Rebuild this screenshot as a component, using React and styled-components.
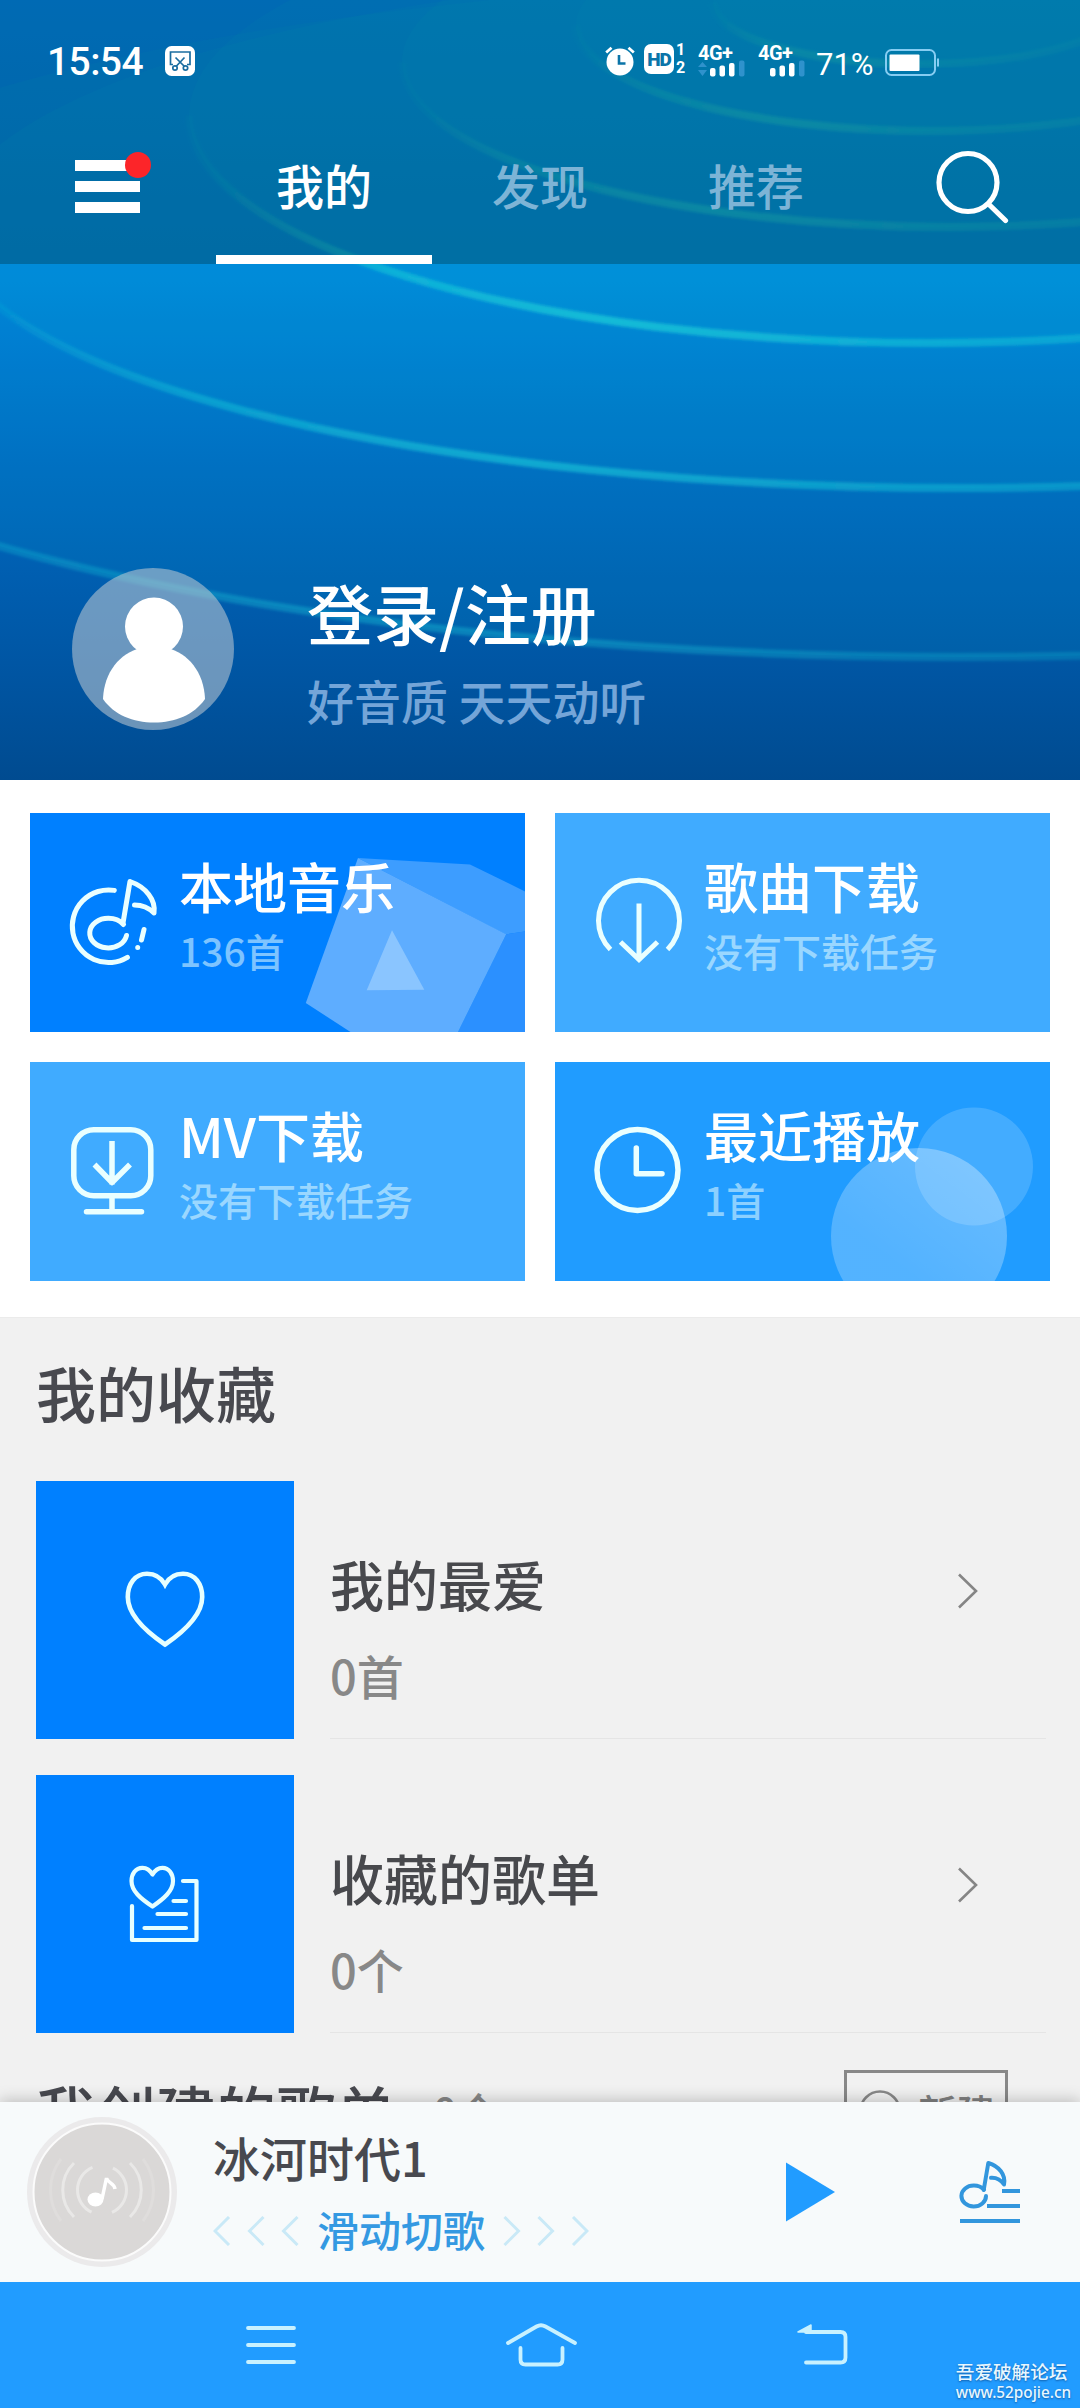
import React, { useState } from 'react';
import styled, { createGlobalStyle } from 'styled-components';

const tabs = ['我的', '发现', '推荐'];

const rings = [
	{ cx: 960, cy: 317, rx: 1300, ry: 340, opacity: 0.45 },
	{ cx: 960, cy: 226, rx: 1010, ry: 262, opacity: 0.75 },
	{ cx: 930, cy: 115, rx: 741, ry: 228, opacity: 0.95 },
	{ cx: 950, cy: 62, rx: 548, ry: 165, opacity: 0.7 },
	{ cx: 930, cy: 25, rx: 354, ry: 106, opacity: 0.7 },
	{ cx: 920, cy: 3, rx: 207, ry: 61, opacity: 0.6 },
];

const HeroBackground = () => (
	<Backdrop viewBox="0 0 1080 780" fill="none">
		<defs>
			<linearGradient id="heroBase" x1="0" y1="0" x2="0" y2="1">
				<stop offset="0" stopColor="#008af0" />
				<stop offset="0.36" stopColor="#0080d8" />
				<stop offset="0.62" stopColor="#0067bd" />
				<stop offset="0.85" stopColor="#0056a4" />
				<stop offset="1" stopColor="#004b90" />
			</linearGradient>
			<linearGradient id="ringLine" x1="0" y1="0" x2="1" y2="0">
				<stop offset="0" stopColor="#16c4d8" stopOpacity="0.1" />
				<stop offset="0.12" stopColor="#16c4d8" stopOpacity="0.65" />
				<stop offset="0.28" stopColor="#16c4d8" stopOpacity="0.9" />
				<stop offset="0.58" stopColor="#16c4d8" stopOpacity="0.55" />
				<stop offset="1" stopColor="#16c4d8" stopOpacity="0.2" />
			</linearGradient>
			<filter id="soft" x="-5%" y="-5%" width="110%" height="110%">
				<feGaussianBlur stdDeviation="1.6" />
			</filter>
		</defs>
		<rect width="1080" height="780" fill="url(#heroBase)" />
		{rings.map(({ cx, cy, rx, ry, opacity }) => (
			<g key={rx}>
				<ellipse cx={cx} cy={cy} rx={rx} ry={ry} fill="#00c4d8" fillOpacity="0.085" />
				<path
					d={`M${cx - rx} ${cy} A${rx} ${ry} 0 0 0 ${cx + rx} ${cy}`}
					stroke="url(#ringLine)"
					strokeWidth="8"
					opacity={opacity}
					filter="url(#soft)"
				/>
			</g>
		))}
	</Backdrop>
);

const ScissorsIcon = () => (
	<svg width="30" height="30" viewBox="0 0 30 30" fill="none">
		<rect width="30" height="30" rx="6.5" fill="#fff" />
		<g stroke="#1b6da0" strokeWidth="1.7">
			<path d="M8 18.5H5.5V6h19.5v12.5h-3" />
			<path d="M10.500 11.500L19.500 20.500M19.500 11.500L11 20.500" />
			<circle cx="10" cy="22" r="2.200" />
			<circle cx="20.500" cy="22" r="2.200" />
		</g>
	</svg>
);

const AlarmIcon = () => (
	<svg width="30" height="30" viewBox="0 0 30 30" fill="none">
		<circle cx="15" cy="16" r="13.5" fill="#fff" />
		<path d="M1.200 6.500L6.500 1.800M28.800 6.500L23.500 1.800" stroke="#fff" strokeWidth="2.800" />
		<path d="M14 9v8.500h6.500" stroke="#0b74a8" strokeWidth="2.600" />
	</svg>
);

const Signal = ({ arrows }) => (
	<SignalBox>
		<span>4G+</span>
		<svg width="47" height="17" viewBox="0 0 47 17">
			{arrows && <path d="M0 7l4.500-5 4.500 5zM0 10l4.500 6 4.500-6z" fill="#2f92cc" />}
			<rect x="12" y="8" width="5.500" height="8.500" rx="2" fill="#fff" />
			<rect x="21.500" y="5.500" width="5.500" height="11" rx="2" fill="#fff" />
			<rect x="31" y="3" width="5.500" height="13.500" rx="2" fill="#fff" />
			<rect x="41" y="0.500" width="5.500" height="16" rx="2" fill="#2f92cc" />
		</svg>
	</SignalBox>
);

const BatteryIcon = () => (
	<BatterySvg width="55" height="28" viewBox="0 0 55 28" fill="none">
		<rect x="1" y="1" width="49" height="25" rx="5.500" stroke="#86cdf2" strokeWidth="2" />
		<rect x="4.500" y="5.500" width="30" height="16.500" rx="1" fill="#fff" />
		<path d="M53 9.500v8" stroke="#86cdf2" strokeWidth="2" />
	</BatterySvg>
);

const MenuIcon = () => (
	<svg width="80" height="64" viewBox="0 0 80 64">
		<path d="M3 10h65v11H3zM3 31h65v11H3zM3 52h65v11H3z" fill="#fff" />
		<circle cx="66" cy="15" r="13" fill="#fc2529" />
	</svg>
);

const SearchIcon = () => (
	<svg width="76" height="76" viewBox="0 0 76 76" fill="none" stroke="#fff" strokeWidth="5.200">
		<circle cx="34" cy="34.500" r="29" />
		<path d="M54.500 56L71.500 72.500" strokeLinecap="round" />
	</svg>
);

const PersonIcon = () => (
	<svg width="162" height="162" viewBox="0 0 162 162" fill="#fff">
		<circle cx="82" cy="58.500" r="29" />
		<path d="M31 131C32 104 48 85 69 80h26c21 5 37 24 38 51c-11 16-30 23.500-51 23.500S42 147 31 131z" />
	</svg>
);

const MusicIcon = () => (
	<CardIcon $stroke={5}>
		<path d="M50.300 20.400A36.300 36.300 0 1 0 63.400 87.300" />
		<path d="M59.500 54.500C55 49.500 49 48.300 44.500 48.300A18.500 14.800 0 1 0 62.500 65.500" />
		<path d="M59 53L66 11.500C82 17 92 30 90 43C84 37 76 35 70.500 35" />
		<path d="M80 59.500L77.500 70M73.700 77.400v.2" />
	</CardIcon>
);

const SongDownloadIcon = () => (
	<CardIcon $stroke={5}>
		<path strokeLinecap="butt" d="M21.500 79.500A40.500 40.500 0 1 1 78.500 79.500" />
		<path strokeLinecap="butt" strokeLinejoin="miter" d="M50 33.500v55M31.500 72L50 89.500 68.500 72" />
	</CardIcon>
);

const MvDownloadIcon = () => (
	<CardIcon $stroke={5.5}>
		<rect x="9.800" y="10.700" width="77" height="66" rx="20" />
		<path strokeLinecap="butt" d="M48 22v43.500M30.500 45.500L48 63.500 66 45.500" />
		<path d="M48 78v14M22.500 92.700h55" />
	</CardIcon>
);

const ClockIcon = () => (
	<CardIcon $stroke={5.5}>
		<circle cx="48.500" cy="51" r="40.500" />
		<path d="M47.300 29v25.700H73" />
	</CardIcon>
);

const CubeArt = () => (
	<CardArt viewBox="0 0 495 219">
		<path d="M328 45l112 6.400 55 27v40l-19 3z" fill="#3d9dff" />
		<path d="M476.200 121.300l18.800-3V219h-67z" fill="#2b90ff" />
		<path d="M328 45l148.200 76.300L428 219H320.500l-44.700-29z" fill="#5eadff" />
		<path d="M362 117.300l32.300 59.400-57.600.5z" fill="#8ac5ff" />
	</CardArt>
);

const BubbleArt = () => (
	<CardArt viewBox="0 0 495 219">
		<defs>
			<linearGradient id="bubble" x1="0.75" y1="0" x2="0.3" y2="0.6">
				<stop offset="0" stopColor="#fff" stopOpacity="0.32" />
				<stop offset="1" stopColor="#fff" stopOpacity="0.23" />
			</linearGradient>
		</defs>
		<circle cx="419" cy="104.500" r="59" fill="#fff" fillOpacity="0.16" />
		<circle cx="364" cy="174" r="88" fill="url(#bubble)" />
	</CardArt>
);

const HeartIcon = () => (
	<svg width="84" height="78" viewBox="0 0 84 78" fill="none" stroke="#e6ffff" strokeWidth="4.600">
		<path d="M42 13.500C37 4.500 30 2.800 24 2.800C12 2.800 4.800 13 4.800 26C4.800 43 20 58.500 42 73.500C64 58.500 79.200 43 79.200 26C79.200 13 72 2.800 60 2.800C54 2.800 47 4.500 42 13.500z" />
	</svg>
);

const SongListIcon = () => (
	<svg
		width="76"
		height="80"
		viewBox="0 0 76 80"
		fill="none"
		stroke="#e6ffff"
		strokeWidth="4.200"
		strokeLinecap="round"
		strokeLinejoin="round"
	>
		<path d="M25.500 10.500C22.500 5 18.500 3.800 15.500 3.800C8.500 3.800 4.500 10 4.500 17C4.500 27 13.500 34.500 25.500 42.500C37 34.500 46 27 46 17C46 10 42 3.800 35.500 3.800C32 3.800 28.500 5 25.500 10.500z" />
		<path d="M5 42v34h64.500V17H56" />
		<path d="M46.500 37h12.500M30.500 50H59M17.500 64H59" />
	</svg>
);

const Chevron = () => (
	<svg width="22" height="36" viewBox="0 0 22 36" fill="none" stroke="#858585" strokeWidth="2.600">
		<path d="M2 1.500L19 18 2 34.500" />
	</svg>
);

const PlusIcon = () => (
	<svg width="42" height="42" viewBox="0 0 42 42" fill="none" stroke="#888" strokeWidth="2.600">
		<circle cx="21" cy="21" r="19.500" />
		<path d="M21 12v18M12 21h18" />
	</svg>
);

const Disc = () => (
	<svg width="150" height="150" viewBox="0 0 150 150" fill="none">
		<circle cx="75" cy="75" r="75" fill="#ebeaeb" />
		<circle cx="75" cy="75" r="68.500" fill="#dad8d7" stroke="#fbfbfb" strokeWidth="2" />
		<g stroke="#e9e8e7" strokeWidth="3">
			<circle cx="75" cy="73" r="24.500" strokeDasharray="56 21" strokeDashoffset="28" />
			<path d="M47 46a38 38 0 0 0 0 54M103 46a38 38 0 0 1 0 54" />
			<path d="M34 42a51 51 0 0 0 0 62M116 42a51 51 0 0 1 0 62" stroke="#dfdddc" />
		</g>
		<ellipse cx="68.500" cy="82.500" rx="8" ry="7" fill="#fff" />
		<path d="M75 82L79.500 61c1 5 8 5 8.500 11" stroke="#fff" strokeWidth="3.500" />
	</svg>
);

const Arrows = ({ flip }) => (
	<ArrowsSvg $flip={flip} width="86" height="30" viewBox="0 0 86 30">
		<path d="M16 1L2 15 16 29M50.500 1L36.500 15 50.500 29M84.500 1L70.500 15 84.500 29" />
	</ArrowsSvg>
);

const PlayIcon = () => (
	<svg width="50" height="60" viewBox="0 0 50 60">
		<path d="M0 0.500L49 30 0 59.500z" fill="#219cff" />
	</svg>
);

const QueueIcon = () => (
	<svg
		width="64"
		height="66"
		viewBox="0 0 64 66"
		fill="none"
		stroke="#3296dd"
		strokeWidth="4"
		strokeLinejoin="round"
	>
		<path d="M26 30.500C23 27.500 19 26.500 16 26.500A12.300 10.500 0 1 0 28 37" strokeLinecap="round" />
		<path d="M25.700 31L30.300 4C41 7 48 16 46 25.500C43 21 38 18.500 33 18.800" strokeLinecap="round" />
		<path d="M44 32h18M29 47h33M2 62h60" />
	</svg>
);

const NavMenuIcon = () => (
	<NavSvg viewBox="0 0 80 60">
		<path d="M17 13h46M17 30h46M17 47h46" />
	</NavSvg>
);

const NavHomeIcon = () => (
	<NavSvg viewBox="0 0 80 60">
		<path d="M7 28L35.500 11.500Q40 9 44.500 11.500L74 28" />
		<path d="M19.500 33v11.500q0 5 5 5h32q5 0 5-5V33" />
	</NavSvg>
);

const NavBackIcon = () => (
	<NavSvg viewBox="0 0 80 60">
		<path d="M22 17h34.500q5 0 5 5v20.500q0 5-5 5H22" />
		<path d="M14 17l13-7v7z" fill="#c8f1ff" strokeWidth="1.500" />
	</NavSvg>
);

const entries = [
	{ title: '本地音乐', note: '136首', color: '#0080ff', Icon: MusicIcon, Art: CubeArt },
	{ title: '歌曲下载', note: '没有下载任务', color: '#40abff', Icon: SongDownloadIcon },
	{ title: 'MV下载', note: '没有下载任务', color: '#40abff', Icon: MvDownloadIcon },
	{ title: '最近播放', note: '1首', color: '#209cff', Icon: ClockIcon, Art: BubbleArt },
];

const favorites = [
	{ title: '我的最爱', count: '0首', Icon: HeartIcon },
	{ title: '收藏的歌单', count: '0个', Icon: SongListIcon },
];

export default function App() {
	const [activeTab, setActiveTab] = useState(0);
	return (
		<>
			<GlobalStyle />
			<Page>
				<Hero>
					<HeroBackground />
					<TopBar>
						<StatusBar>
							<Clock>15:54</Clock>
							<ScissorsIcon />
							<StatusRight>
								<AlarmIcon />
								<HdBadge>
									<b>HD</b>
									<span>
										<i>1</i>
										<i>2</i>
									</span>
								</HdBadge>
								<Signal arrows />
								<Signal />
								<Percent>71%</Percent>
								<BatteryIcon />
							</StatusRight>
						</StatusBar>
						<TabBar>
							<IconButton>
								<MenuIcon />
							</IconButton>
							{tabs.map((tab, index) => (
								<Tab
									key={tab}
									$active={index === activeTab}
									onClick={() => setActiveTab(index)}
								>
									{tab}
								</Tab>
							))}
							<IconButton>
								<SearchIcon />
							</IconButton>
						</TabBar>
					</TopBar>
					<Profile>
						<Avatar>
							<PersonIcon />
						</Avatar>
						<div>
							<h1>登录/注册</h1>
							<p>好音质 天天动听</p>
						</div>
					</Profile>
				</Hero>
				<Entries>
					{entries.map(({ title, note, color, Icon, Art }) => (
						<Card key={title} $color={color}>
							{Art && <Art />}
							<Icon />
							<CardText>
								<h2>{title}</h2>
								<p>{note}</p>
							</CardText>
						</Card>
					))}
				</Entries>
				<Library>
					<SectionTitle>我的收藏</SectionTitle>
					<FavoriteList>
						{favorites.map(({ title, count, Icon }) => (
							<Favorite key={title}>
								<Cover>
									<Icon />
								</Cover>
								<FavoriteBody>
									<div>
										<h3>{title}</h3>
										<p>{count}</p>
									</div>
									<Chevron />
								</FavoriteBody>
							</Favorite>
						))}
					</FavoriteList>
					<CreatedHeader>
						<SectionTitle>我创建的歌单</SectionTitle>
						<span>0个</span>
						<NewButton>
							<PlusIcon />
							新建
						</NewButton>
					</CreatedHeader>
				</Library>
				<Player>
					<Disc />
					<Song>
						<h3>冰河时代1</h3>
						<SwipeHint>
							<Arrows />
							滑动切歌
							<Arrows flip />
						</SwipeHint>
					</Song>
					<PlayIcon />
					<QueueIcon />
				</Player>
				<SystemNav>
					<NavMenuIcon />
					<NavHomeIcon />
					<NavBackIcon />
					<Watermark>
						<strong>吾爱破解论坛</strong>
						<span>www.52pojie.cn</span>
					</Watermark>
				</SystemNav>
			</Page>
		</>
	);
}

const GlobalStyle = createGlobalStyle`
	* {
		box-sizing: border-box;
	}
	body {
		margin: 0;
		font-family: 'Noto Sans CJK SC', 'Noto Sans', sans-serif;
		font-weight: 500;
	}
	h1, h2, h3, p {
		margin: 0;
		font-weight: 500;
	}
	button {
		font: inherit;
		border: none;
		background: none;
		padding: 0;
	}
	svg {
		display: block;
		flex-shrink: 0;
	}
`;

const Page = styled.div`
	width: 1080px;
	height: 2408px;
	display: flex;
	flex-direction: column;
	overflow: hidden;
	background-color: #fff;
	white-space: nowrap;
`;

const Hero = styled.header`
	position: relative;
	height: 780px;
	flex-shrink: 0;
	color: #fff;
`;

const Backdrop = styled.svg`
	position: absolute;
	inset: 0;
	width: 100%;
	height: 100%;
`;

const TopBar = styled.div`
	position: relative;
	height: 264px;
	background-color: rgba(0, 22, 20, 0.27);
`;

const StatusBar = styled.div`
	height: 120px;
	padding: 46px 140px 44px 47px;
	display: flex;
	align-items: center;
	font-family: Roboto, sans-serif;
`;

const Clock = styled.span`
	width: 118px;
	padding-top: 2px;
	font-size: 39px;
	font-weight: 500;
	line-height: 30px;
	letter-spacing: -0.6px;
`;

const StatusRight = styled.div`
	margin-left: auto;
	display: flex;
	align-items: center;
`;

const HdBadge = styled.div`
	display: flex;
	margin-left: 9px;
	b {
		width: 30px;
		height: 30px;
		border-radius: 7px;
		background-color: #fff;
		color: #0b74a8;
		font-size: 19px;
		line-height: 31px;
		text-align: center;
		font-weight: 900;
		letter-spacing: -1px;
	}
	span {
		display: flex;
		flex-direction: column;
		padding-left: 2px;
		width: 24px;
	}
	i {
		font-style: normal;
		font-weight: 700;
		font-size: 16px;
		line-height: 12px;
		&:last-child {
			line-height: 23px;
		}
	}
`;

const SignalBox = styled.div`
	display: flex;
	flex-direction: column;
	width: 60px;
	height: 30px;
	span {
		font-size: 20px;
		font-weight: 700;
		line-height: 14px;
		letter-spacing: -0.5px;
	}
`;

const Percent = styled.span`
	width: 69px;
	margin-left: -2px;
	padding-top: 7px;
	font-size: 31px;
	font-weight: 400;
	line-height: 30px;
`;

const BatterySvg = styled.svg`
	margin-top: 3px;
`;

const TabBar = styled.nav`
	height: 144px;
	display: grid;
	grid-template-columns: repeat(5, 216px);
`;

const IconButton = styled.button`
	display: flex;
	justify-content: center;
	padding-top: 28px;
	&:first-child {
		padding-left: 8px;
		padding-top: 30px;
	}
`;

const Tab = styled.button`
	height: 144px;
	padding: 34px 0 41px;
	border-bottom: 9px solid ${({ $active }) => ($active ? '#fff' : 'transparent')};
	color: ${({ $active }) => ($active ? '#fff' : '#7db4d6')};
	font-size: 48px;
	line-height: 60px;
`;

const Profile = styled.div`
	position: relative;
	display: flex;
	gap: 73px;
	padding: 304px 0 0 72px;
	h1 {
		margin-top: 3px;
		font-size: 66px;
		line-height: 80px;
	}
	p {
		margin-top: 19px;
		font-size: 47px;
		line-height: 60px;
		color: #74a5d8;
	}
`;

const Avatar = styled.div`
	width: 162px;
	height: 162px;
	border-radius: 50%;
	background-color: rgba(190, 202, 210, 0.56);
`;

const Entries = styled.section`
	display: grid;
	grid-template-columns: repeat(2, 495px);
	grid-auto-rows: 219px;
	gap: 30px;
	padding: 33px 30px 36px;
`;

const Card = styled.div`
	position: relative;
	display: flex;
	gap: 15px;
	padding: 40px 0 0 34px;
	background-color: ${({ $color }) => $color};
	color: #fff;
`;

const CardIcon = styled.svg.attrs({ viewBox: '0 0 100 100' })`
	position: relative;
	width: 100px;
	height: 100px;
	margin-top: 17px;
	fill: none;
	stroke: #eaffff;
	stroke-width: ${({ $stroke }) => $stroke};
	stroke-linecap: round;
	stroke-linejoin: round;
	[stroke-linecap='butt'] {
		stroke-linecap: butt;
	}
	[stroke-linejoin='miter'] {
		stroke-linejoin: miter;
	}
`;

const CardArt = styled.svg`
	position: absolute;
	inset: 0;
	width: 100%;
	height: 100%;
`;

const CardText = styled.div`
	position: relative;
	h2 {
		margin-top: 1px;
		font-size: 54px;
		line-height: 64px;
	}
	p {
		margin-top: 7px;
		font-size: 39px;
		line-height: 50px;
		color: rgba(225, 250, 255, 0.56);
	}
`;

const Library = styled.main`
	flex: 1;
	min-height: 0;
	overflow: hidden;
	padding-top: 34px;
	background-color: #f1f1f1;
	border-top: 1px solid #ebebeb;
`;

const SectionTitle = styled.h2`
	padding-left: 36px;
	font-size: 60px;
	line-height: 80px;
	color: #48494f;
`;

const FavoriteList = styled.div`
	display: flex;
	flex-direction: column;
	gap: 36px;
	padding: 49px 34px 0 36px;
`;

const Favorite = styled.div`
	display: flex;
	gap: 36px;
	height: 258px;
`;

const Cover = styled.div`
	width: 258px;
	display: flex;
	align-items: center;
	justify-content: center;
	background-color: #0080ff;
`;

const FavoriteBody = styled.div`
	flex: 1;
	display: flex;
	justify-content: space-between;
	padding-right: 67px;
	border-bottom: 1px solid #e5e5e5;
	h3 {
		padding-top: 71px;
		font-size: 54px;
		line-height: 64px;
		color: #48494d;
	}
	p {
		margin-top: 29px;
		font-size: 47px;
		line-height: 60px;
		color: #888;
	}
	svg {
		margin-top: 92px;
	}
`;

const CreatedHeader = styled.div`
	display: flex;
	align-items: center;
	height: 84px;
	margin-top: 36px;
	padding-right: 72px;
	span {
		padding-left: 37px;
		font-size: 42px;
		line-height: 60px;
		color: #888;
	}
`;

const NewButton = styled.button`
	display: flex;
	align-items: center;
	gap: 17px;
	width: 164px;
	height: 82px;
	margin-left: auto;
	padding-left: 12px;
	border: 3px solid #888;
	font-size: 39px;
	color: #808080;
`;

const Player = styled.section`
	position: relative;
	display: flex;
	align-items: center;
	height: 180px;
	padding: 0 58px 0 27px;
	background-color: #f7fafb;
	box-shadow: 0 -2px 14px rgba(0, 0, 0, 0.22);
	> svg:last-child {
		margin-left: 122px;
	}
`;

const Song = styled.div`
	flex: 1;
	padding-left: 36px;
	h3 {
		font-size: 47px;
		line-height: 60px;
		color: #48494f;
	}
`;

const SwipeHint = styled.p`
	display: flex;
	align-items: center;
	gap: 18px;
	margin-top: 14px;
	font-size: 42px;
	line-height: 56px;
	color: #3499e2;
`;

const ArrowsSvg = styled.svg`
	margin-top: 3px;
	fill: none;
	stroke: #c9e9f7;
	stroke-width: 3;
	transform: ${({ $flip }) => ($flip ? 'scaleX(-1)' : 'none')};
`;

const SystemNav = styled.footer`
	position: relative;
	display: flex;
	gap: 190px;
	height: 126px;
	padding: 33px 0 0 231px;
	background-color: #219cff;
	svg:nth-child(3) {
		margin-left: 13px;
	}
`;

const NavSvg = styled.svg`
	width: 80px;
	height: 60px;
	fill: none;
	stroke: #c8f1ff;
	stroke-width: 3.8;
	stroke-linecap: round;
	stroke-linejoin: round;
`;

const Watermark = styled.div`
	position: absolute;
	right: 9px;
	bottom: 7px;
	display: flex;
	flex-direction: column;
	color: #e8f7ff;
	text-shadow: 0 1px 2px rgba(0, 50, 110, 0.6);
	strong {
		font-size: 18.6px;
		line-height: 24px;
		font-weight: 500;
	}
	span {
		font-family: 'Noto Sans', sans-serif;
		font-size: 15.3px;
		line-height: 18px;
	}
`;
